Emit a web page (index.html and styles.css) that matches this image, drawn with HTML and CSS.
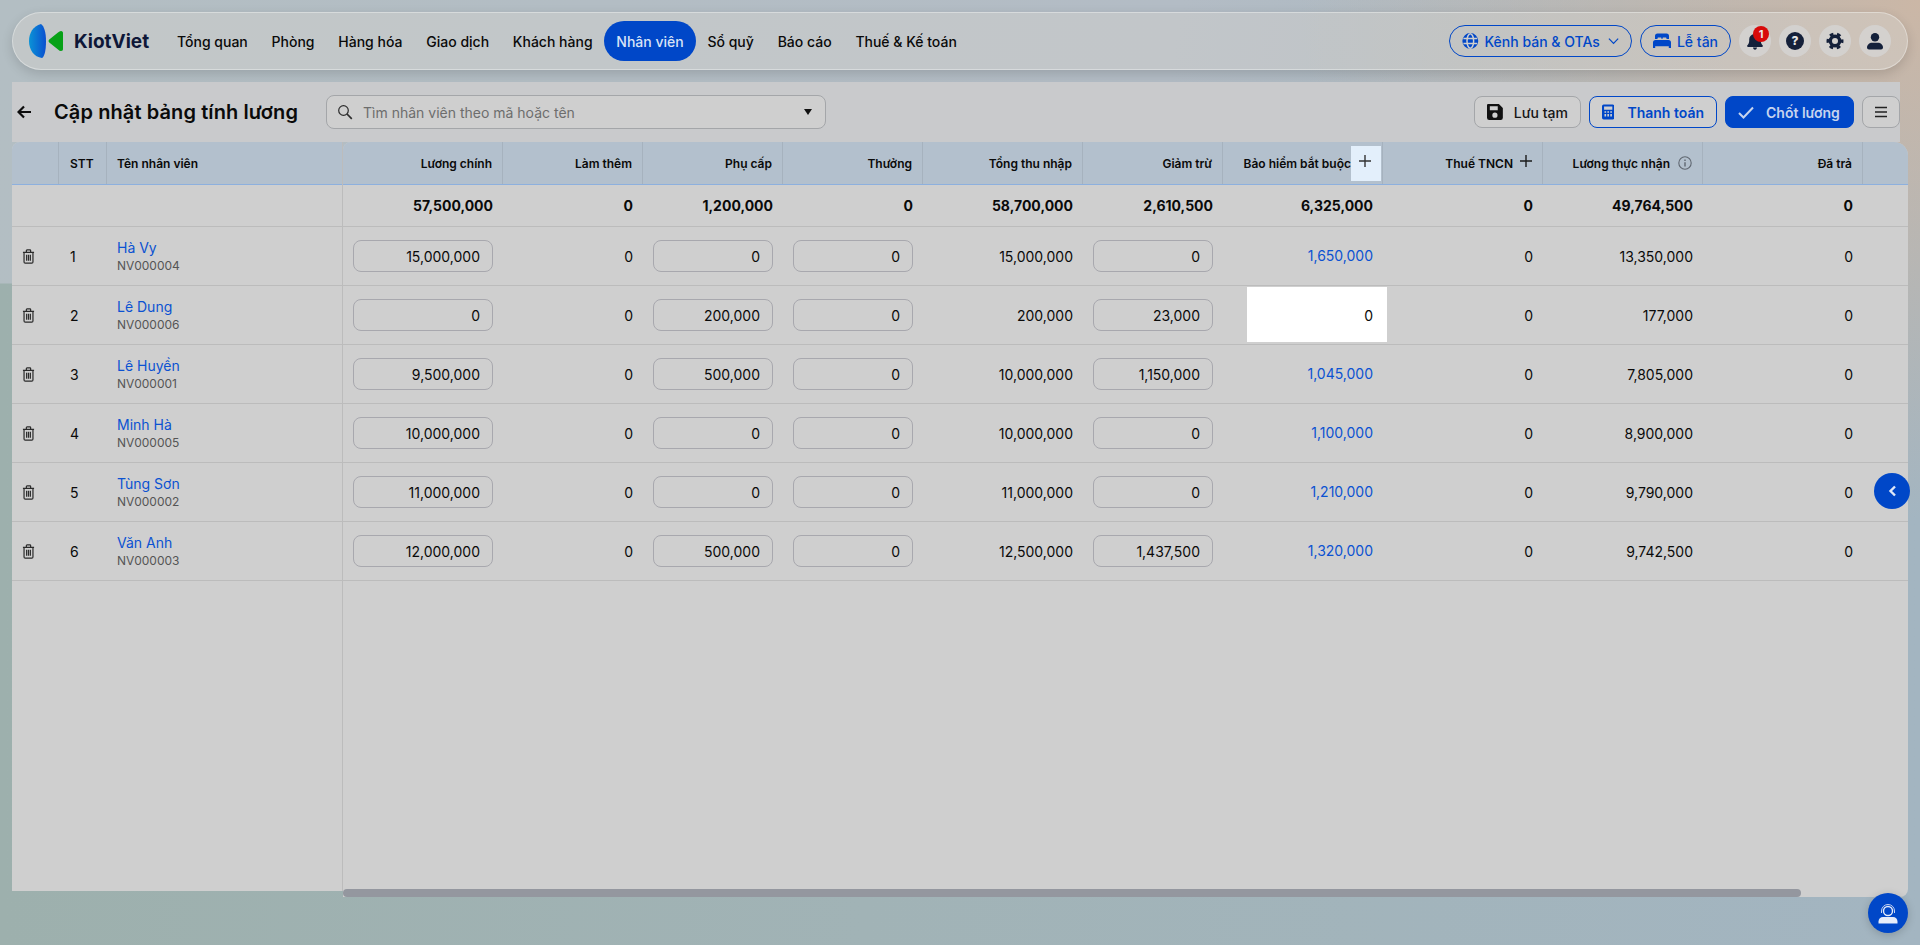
FILE: index.html
```html
<!DOCTYPE html>
<html lang="en">
<head>
    <meta charset="UTF-8">
    <meta name="viewport" content="width=device-width, initial-scale=1.0">
    <title>Cập nhật bảng tính lương | KiotViet</title>
    <link rel="stylesheet" href="styles.css">
</head>
<body>
    <svg class="icon-defs" width="0" height="0">
        <symbol id="trash" viewBox="0 0 14 16">
            <path d="M1 3.500h12M4.700 3.200V1.600c0-.4.3-.7.7-.7h3.200c.4 0 .7.3.7.7v1.600M2.200 3.500v10.300c0 .8.600 1.300 1.300 1.300h7c.7 0 1.300-.5 1.300-1.300V3.500M5 6.200v6.400M7 6.200v6.400M9 6.200v6.400" fill="none" stroke="currentColor" stroke-width="1.300"/>
        </symbol>
        <symbol id="plus" viewBox="0 0 14 14">
            <path d="M7 1v12M1 7h12" fill="none" stroke="currentColor" stroke-width="1.400"/>
        </symbol>
    </svg>

    <header class="topbar">
        <a href="#" class="brand">
            <svg width="34" height="34" viewBox="0 0 34 34">
                <defs>
                    <linearGradient id="lens" x1="0" x2="1" y1="0" y2="0">
                        <stop offset="0" stop-color="#0b93d6"/>
                        <stop offset="1" stop-color="#0a4fd0"/>
                    </linearGradient>
                </defs>
                <path d="M12 0C4 2 0 9 0 17c0 9 5 16 13 17 2-1 4-6 4-17 0-9-2-15-5-17z" fill="url(#lens)"/>
                <path d="M32 7c1.500 0 2 1 2 2v16c0 1-.5 2-2 2-1 0-2-.5-3-1.500l-8.700-7c-1-1-1-2 0-3l8.700-7c1-1 2-1.500 3-1.500z" fill="#07a117"/>
            </svg>
            <span class="brand-name">KiotViet</span>
        </a>
        <nav class="main-nav">
            <a href="#" class="nav-item">Tổng quan</a>
            <a href="#" class="nav-item">Phòng</a>
            <a href="#" class="nav-item">Hàng hóa</a>
            <a href="#" class="nav-item">Giao dịch</a>
            <a href="#" class="nav-item">Khách hàng</a>
            <a href="#" class="nav-item active">Nhân viên</a>
            <a href="#" class="nav-item">Sổ quỹ</a>
            <a href="#" class="nav-item">Báo cáo</a>
            <a href="#" class="nav-item">Thuế &amp; Kế toán</a>
        </nav>
        <div class="top-actions">
            <button class="pill-btn channel-btn">
                <svg width="18" height="18" viewBox="0 0 18 18" fill="none" stroke="currentColor" stroke-width="1.600">
                    <circle cx="9" cy="9" r="7.800" fill="currentColor"/>
                    <ellipse cx="9" cy="9" rx="3.600" ry="7.800" stroke="#d0cfcd"/>
                    <path d="M1.500 6.300h15M1.500 11.700h15" stroke="#d0cfcd"/>
                </svg>
                Kênh bán &amp; OTAs
                <svg class="chevron" width="12" height="8" viewBox="0 0 12 8">
                    <path d="M1 1.500l5 5 5-5" fill="none" stroke="currentColor" stroke-width="1.300"/>
                </svg>
            </button>
            <button class="pill-btn">
                <svg width="18" height="16" viewBox="0 0 18 16" fill="currentColor">
                    <path d="M2 3a2.500 2.500 0 0 1 2.500-2.500h9A2.500 2.500 0 0 1 16 3v3h-2.500V5.500c0-.6-.4-1-1-1h-2c-.6 0-1 .4-1 1V6h-1v-.5c0-.6-.4-1-1-1h-2c-.6 0-1 .4-1 1V6H2z"/>
                    <path d="M2.500 7h13A2.500 2.500 0 0 1 18 9.500V15h-2.200v-1.800H2.200V15H0V9.500A2.500 2.500 0 0 1 2.500 7z"/>
                </svg>
                Lễ tân
            </button>
            <button class="round-btn notify-btn">
                <svg width="16" height="18" viewBox="0 0 16 18" fill="#14203a">
                    <path d="M8 0c.7 0 1.200.5 1.200 1.200v.7C12 2.400 13.800 4.700 13.800 7.500v1.200c0 1.700.6 3.300 1.700 4.500l.3.400c.4.600 0 1.400-.8 1.400H1c-.8 0-1.200-.8-.8-1.400l.3-.4c1.100-1.200 1.700-2.800 1.700-4.500V7.500c0-2.800 1.800-5.100 4.600-5.600v-.7C6.800.5 7.300 0 8 0z"/>
                    <path d="M6 15.600h4c0 1.200-.9 2.200-2 2.200s-2-1-2-2.200z"/>
                </svg>
                <span class="badge">1</span>
            </button>
            <button class="round-btn help-btn">?</button>
            <button class="round-btn">
                <svg width="18" height="18" viewBox="0 0 18 18" fill="none" stroke="#14203a">
                    <circle cx="9" cy="9" r="4.700" stroke-width="3.400"/>
                    <circle cx="9" cy="9" r="7.200" stroke-width="2.600" stroke-dasharray="3.800 3.740" stroke-dashoffset="1.900"/>
                </svg>
            </button>
            <button class="round-btn">
                <svg width="16" height="17" viewBox="0 0 16 17" fill="#14203a">
                    <circle cx="8" cy="4.300" r="4.200"/>
                    <path d="M4.800 9.800h6.400c2.600 0 4.800 2.200 4.800 4.800 0 1.100-.9 2-2 2H2c-1.100 0-2-.9-2-2 0-2.600 2.200-4.800 4.800-4.800z"/>
                </svg>
            </button>
        </div>
    </header>

    <section class="toolbar">
        <svg class="back" width="14" height="14" viewBox="0 0 14 14">
            <path d="M7 1.500L1.500 7 7 12.500M2 7h12" fill="none" stroke="#0c0c0c" stroke-width="2.200"/>
        </svg>
        <h1 class="page-title">Cập nhật bảng tính lương</h1>
        <div class="search-box">
            <svg width="16" height="16" viewBox="0 0 16 16" fill="none" stroke="#2c2c2c" stroke-width="1.200">
                <circle cx="6.500" cy="6.500" r="4.800"/>
                <path d="M10 10l4.800 4.800" stroke-width="1.700"/>
            </svg>
            <span class="search-text">Tìm nhân viên theo mã hoặc tên</span>
            <span class="caret"></span>
        </div>
        <div class="toolbar-actions">
            <button class="btn btn-save">
                <svg width="16" height="16" viewBox="1 1 14 14" fill="#111">
                    <path d="M2 1h9.500L15 4.500V13a2 2 0 0 1-2 2H3a2 2 0 0 1-2-2V2a1 1 0 0 1 1-1zm1.500 2v3.500h7V3zM8 8.500a2.300 2.300 0 1 0 0 4.600 2.300 2.300 0 0 0 0-4.600z" fill-rule="evenodd"/>
                </svg>
                Lưu tạm
            </button>
            <button class="btn btn-outline">
                <svg width="15" height="18" viewBox="0 0 15 18" fill="currentColor">
                    <path d="M2 0h11a2 2 0 0 1 2 2v14a2 2 0 0 1-2 2H2a2 2 0 0 1-2-2V2a2 2 0 0 1 2-2zm.5 2.500v3.800h10V2.500zM3 8v2h2V8zm3.500 0v2h2V8zM10 8v2h2V8zm-7 3.500v3h2v-3zm3.500 0v3h2v-3zm3.500 0v3h2v-3z" fill-rule="evenodd"/>
                </svg>
                Thanh toán
            </button>
            <button class="btn btn-primary">
                <svg width="16" height="13" viewBox="0 0 16 13">
                    <path d="M1 7l4.500 4.500L15 1.500" fill="none" stroke="currentColor" stroke-width="2"/>
                </svg>
                Chốt lương
            </button>
            <button class="btn btn-menu">
                <svg width="14" height="12" viewBox="0 0 14 12">
                    <path d="M1 1.500h12M1 6h12M1 10.500h12" fill="none" stroke="#222" stroke-width="1.500"/>
                </svg>
            </button>
        </div>
    </section>

    <main class="sheet">
        <div class="frozen">
            <div class="frozen-row head">
                <div class="cell"></div>
                <div class="cell">STT</div>
                <div class="cell">Tên nhân viên</div>
            </div>
            <div class="frozen-row total">
                <div class="cell"></div><div class="cell"></div><div class="cell"></div>
            </div>
            <div class="frozen-row body-row">
                <div class="cell trash"><svg width="13" height="15"><use href="#trash"/></svg></div>
                <div class="cell">1</div>
                <div class="cell name"><a href="#" class="link">Hà Vy</a><span class="code">NV000004</span></div>
            </div>
            <div class="frozen-row body-row">
                <div class="cell trash"><svg width="13" height="15"><use href="#trash"/></svg></div>
                <div class="cell">2</div>
                <div class="cell name"><a href="#" class="link">Lê Dung</a><span class="code">NV000006</span></div>
            </div>
            <div class="frozen-row body-row">
                <div class="cell trash"><svg width="13" height="15"><use href="#trash"/></svg></div>
                <div class="cell">3</div>
                <div class="cell name"><a href="#" class="link">Lê Huyền</a><span class="code">NV000001</span></div>
            </div>
            <div class="frozen-row body-row">
                <div class="cell trash"><svg width="13" height="15"><use href="#trash"/></svg></div>
                <div class="cell">4</div>
                <div class="cell name"><a href="#" class="link">Minh Hà</a><span class="code">NV000005</span></div>
            </div>
            <div class="frozen-row body-row">
                <div class="cell trash"><svg width="13" height="15"><use href="#trash"/></svg></div>
                <div class="cell">5</div>
                <div class="cell name"><a href="#" class="link">Tùng Sơn</a><span class="code">NV000002</span></div>
            </div>
            <div class="frozen-row body-row">
                <div class="cell trash"><svg width="13" height="15"><use href="#trash"/></svg></div>
                <div class="cell">6</div>
                <div class="cell name"><a href="#" class="link">Văn Anh</a><span class="code">NV000003</span></div>
            </div>
        </div>

        <div class="scroller">
            <div class="data-row head">
                <div class="cell">Lương chính</div>
                <div class="cell">Làm thêm</div>
                <div class="cell">Phụ cấp</div>
                <div class="cell">Thưởng</div>
                <div class="cell">Tổng thu nhập</div>
                <div class="cell">Giảm trừ</div>
                <div class="cell">Bảo hiểm bắt buộc<span class="add-btn focus"><svg width="14" height="14"><use href="#plus"/></svg></span></div>
                <div class="cell">Thuế TNCN<span class="add-btn"><svg width="14" height="14"><use href="#plus"/></svg></span></div>
                <div class="cell">Lương thực nhận
                    <svg class="info" width="14" height="14" viewBox="0 0 14 14">
                        <circle cx="7" cy="7" r="6.200" fill="none" stroke="#5f6670" stroke-width="1.100"/>
                        <path d="M7 6.200v4.200M7 3.500v1.500" stroke="#5f6670" stroke-width="1.400"/>
                    </svg>
                </div>
                <div class="cell">Đã trả</div>
                <div class="cell"></div>
            </div>
            <div class="data-row total">
                <div class="cell">57,500,000</div>
                <div class="cell">0</div>
                <div class="cell">1,200,000</div>
                <div class="cell">0</div>
                <div class="cell">58,700,000</div>
                <div class="cell">2,610,500</div>
                <div class="cell">6,325,000</div>
                <div class="cell">0</div>
                <div class="cell">49,764,500</div>
                <div class="cell">0</div>
                <div class="cell"></div>
            </div>
            <div class="data-row body-row">
                <div class="cell"><input class="amount" value="15,000,000"></div>
                <div class="cell">0</div>
                <div class="cell"><input class="amount" value="0"></div>
                <div class="cell"><input class="amount" value="0"></div>
                <div class="cell">15,000,000</div>
                <div class="cell"><input class="amount" value="0"></div>
                <div class="cell"><a href="#" class="link">1,650,000</a></div>
                <div class="cell">0</div>
                <div class="cell">13,350,000</div>
                <div class="cell">0</div>
                <div class="cell"></div>
            </div>
            <div class="data-row body-row">
                <div class="cell"><input class="amount" value="0"></div>
                <div class="cell">0</div>
                <div class="cell"><input class="amount" value="200,000"></div>
                <div class="cell"><input class="amount" value="0"></div>
                <div class="cell">200,000</div>
                <div class="cell"><input class="amount" value="23,000"></div>
                <div class="cell spotlight"><span>0</span></div>
                <div class="cell">0</div>
                <div class="cell">177,000</div>
                <div class="cell">0</div>
                <div class="cell"></div>
            </div>
            <div class="data-row body-row">
                <div class="cell"><input class="amount" value="9,500,000"></div>
                <div class="cell">0</div>
                <div class="cell"><input class="amount" value="500,000"></div>
                <div class="cell"><input class="amount" value="0"></div>
                <div class="cell">10,000,000</div>
                <div class="cell"><input class="amount" value="1,150,000"></div>
                <div class="cell"><a href="#" class="link">1,045,000</a></div>
                <div class="cell">0</div>
                <div class="cell">7,805,000</div>
                <div class="cell">0</div>
                <div class="cell"></div>
            </div>
            <div class="data-row body-row">
                <div class="cell"><input class="amount" value="10,000,000"></div>
                <div class="cell">0</div>
                <div class="cell"><input class="amount" value="0"></div>
                <div class="cell"><input class="amount" value="0"></div>
                <div class="cell">10,000,000</div>
                <div class="cell"><input class="amount" value="0"></div>
                <div class="cell"><a href="#" class="link">1,100,000</a></div>
                <div class="cell">0</div>
                <div class="cell">8,900,000</div>
                <div class="cell">0</div>
                <div class="cell"></div>
            </div>
            <div class="data-row body-row">
                <div class="cell"><input class="amount" value="11,000,000"></div>
                <div class="cell">0</div>
                <div class="cell"><input class="amount" value="0"></div>
                <div class="cell"><input class="amount" value="0"></div>
                <div class="cell">11,000,000</div>
                <div class="cell"><input class="amount" value="0"></div>
                <div class="cell"><a href="#" class="link">1,210,000</a></div>
                <div class="cell">0</div>
                <div class="cell">9,790,000</div>
                <div class="cell">0</div>
                <div class="cell"></div>
            </div>
            <div class="data-row body-row">
                <div class="cell"><input class="amount" value="12,000,000"></div>
                <div class="cell">0</div>
                <div class="cell"><input class="amount" value="500,000"></div>
                <div class="cell"><input class="amount" value="0"></div>
                <div class="cell">12,500,000</div>
                <div class="cell"><input class="amount" value="1,437,500"></div>
                <div class="cell"><a href="#" class="link">1,320,000</a></div>
                <div class="cell">0</div>
                <div class="cell">9,742,500</div>
                <div class="cell">0</div>
                <div class="cell"></div>
            </div>
            <div class="scroll-thumb"></div>
        </div>

        <button class="side-toggle">
            <svg width="9" height="12" viewBox="0 0 9 12">
                <path d="M7 1.500L2.500 6 7 10.500" fill="none" stroke="#dfe8f8" stroke-width="2.400"/>
            </svg>
        </button>
    </main>

    <button class="support-btn">
        <svg width="20" height="21" viewBox="0 0 20 21" fill="none">
            <path d="M3.500 10V8a6.500 6.500 0 0 1 13 0v2" stroke="#c9d6f2" stroke-width="1"/>
            <circle cx="10" cy="8" r="4.500" stroke="#e6ecfa" stroke-width="1.400"/>
            <path d="M7.500 10.300c1 .7 3.500.7 5.500 0" stroke="#0047c8" stroke-width="1"/>
            <path d="M5 14h10c2.500 0 4.500 2 4.500 4.500V20.500H.5v-2C.5 16 2.500 14 5 14z" fill="#e6ecfa"/>
        </svg>
    </button>
</body>
</html>
```

FILE: styles.css
```css
:root {
    --primary: #0047c8;
    --link: #0b52d2;
    --panel: #cfcfcf;
    --head: #b3c0cd;
    --line: #bcbcbc;
    --text: #0a0a0a;
    --text-secondary: #555555;
}

* {
    margin: 0;
    padding: 0;
    box-sizing: border-box;
    font-family: Inter, "Noto Sans", sans-serif;
}

body {
    height: 945px;
    overflow: hidden;
    padding: 12px;
    display: flex;
    flex-direction: column;
    color: var(--text);
    font-size: 14px;
    background:
        radial-gradient(ellipse 620px 520px at 100% 0, #cbb7a6 0%, rgba(203, 183, 166, 0) 100%),
        linear-gradient(100deg, #b3bec3 0%, #b3bcc5 60%, rgba(179, 188, 197, 0) 100%) top / 100% 30% no-repeat,
        linear-gradient(90deg, #9db0ad 0%, #a1b3b6 45%, #a3b5c1 100%);
}

a {
    text-decoration: none;
    color: inherit;
}

button {
    border: none;
    background: none;
    cursor: pointer;
}

.icon-defs {
    position: absolute;
}

/* Top navigation */
.topbar {
    flex: none;
    height: 58px;
    display: flex;
    align-items: center;
    padding: 0 16px;
    border-radius: 29px;
    background: rgba(215, 212, 208, 0.42);
    border: 1px solid rgba(255, 255, 255, 0.35);
    box-shadow: 0 4px 12px rgba(0, 0, 0, 0.14);
}

.brand {
    display: flex;
    align-items: center;
    gap: 11px;
    margin-right: 16px;
}

.brand-name {
    font-size: 19px;
    font-weight: 700;
    color: #0e1738;
}

.main-nav {
    display: flex;
    align-items: center;
}

.nav-item {
    height: 40px;
    padding: 0 11.9px;
    display: flex;
    align-items: center;
    border-radius: 20px;
    font-weight: 500;
    white-space: nowrap;
}

.nav-item.active {
    background: var(--primary);
    color: #d9e3f6;
}

.top-actions {
    margin-left: auto;
    display: flex;
    align-items: center;
    gap: 8px;
}

.pill-btn {
    height: 32px;
    padding: 0 12px;
    display: flex;
    align-items: center;
    gap: 6px;
    border-radius: 16px;
    border: 1px solid var(--primary);
    color: var(--primary);
    font-size: 14px;
    font-weight: 500;
    white-space: nowrap;
}

.channel-btn {
    width: 183px;
}

.chevron {
    margin-left: 2px;
}

.round-btn {
    position: relative;
    width: 32px;
    height: 32px;
    border-radius: 50%;
    display: flex;
    align-items: center;
    justify-content: center;
    background: rgba(214, 214, 214, 0.75);
}

.help-btn {
    isolation: isolate;
    color: #e6e6e6;
    font-size: 12px;
    font-weight: 800;
    line-height: 1;
}

.help-btn::before {
    content: "";
    position: absolute;
    z-index: -1;
    inset: 7px;
    border-radius: 50%;
    background: #14203a;
}

.badge {
    position: absolute;
    top: 1px;
    right: 2px;
    width: 16px;
    height: 16px;
    border-radius: 50%;
    background: #d80a0a;
    color: #e9e9e9;
    font-size: 11px;
    font-weight: 700;
    line-height: 16px;
    text-align: center;
}

/* Page toolbar */
.toolbar {
    flex: none;
    height: 60px;
    margin-top: 12px;
    margin-right: 8px;
    display: flex;
    align-items: center;
    padding-left: 5px;
    background: #c9cacc;
}

.page-title {
    margin-left: 23px;
    font-size: 20px;
    font-weight: 600;
    letter-spacing: 0.1px;
    white-space: nowrap;
}

.search-box {
    width: 500px;
    height: 34px;
    margin-left: 28px;
    padding: 0 10px;
    display: flex;
    align-items: center;
    gap: 10px;
    border: 1px solid #a4a6a9;
    border-radius: 8px;
    background: #cfcfcf;
}

.search-text {
    flex: 1;
    color: #6d6d6d;
}

.caret {
    width: 0;
    height: 0;
    margin-right: 3px;
    border-left: 4px solid transparent;
    border-right: 4px solid transparent;
    border-top: 6px solid #111;
}

.toolbar-actions {
    margin-left: auto;
    display: flex;
    gap: 8px;
}

.btn {
    height: 32px;
    padding: 0 12px;
    display: flex;
    align-items: center;
    gap: 12px;
    border: 1px solid #a4a6a9;
    border-radius: 8px;
    background: #cfcfcf;
    color: #151515;
    font-size: 14px;
    font-weight: 500;
    white-space: nowrap;
}

.btn-save {
    width: 107px;
    gap: 11px;
}

.btn-outline {
    border-color: var(--primary);
    color: var(--primary);
    width: 128px;
    font-weight: 600;
    gap: 13px;
}

.btn-primary {
    width: 129px;
    background: var(--primary);
    border-color: var(--primary);
    color: #c6d4ee;
    font-weight: 600;
}

.btn-menu {
    width: 38px;
    padding: 0;
    justify-content: center;
}

/* Salary table */
.sheet {
    position: relative;
    flex: none;
    height: 755px;
    display: flex;
    align-items: flex-start;
}

.frozen {
    flex: none;
    width: 331px;
    height: 749px;
    background: var(--panel);
    border-right: 1px solid var(--line);
    border-top-left-radius: 8px;
    overflow: hidden;
}

.scroller {
    position: relative;
    flex: 1;
    height: 755px;
    background: var(--panel);
    border-radius: 8px 14px 8px 0;
    overflow: hidden;
}

.frozen-row,
.data-row {
    display: grid;
    border-bottom: 1px solid var(--line);
}

.frozen-row {
    grid-template-columns: 47px 48px 235px;
}

.data-row {
    grid-template-columns: 160px 140px 140px 140px 160px 140px 160px 160px 160px 160px 45px;
}

.head {
    height: 43px;
    background: var(--head);
    border-bottom-color: #8db0de;
    font-size: 12px;
    font-weight: 600;
}

.total {
    height: 42px;
}

.body-row {
    height: 59px;
}

.cell {
    display: flex;
    align-items: center;
    padding: 0 10px;
    min-width: 0;
    white-space: nowrap;
}

.data-row .cell {
    justify-content: flex-end;
}

.frozen-row .cell:nth-child(2) {
    padding-left: 11px;
}

.frozen-row .cell.trash {
    padding-left: 10px;
    color: #2b2b2b;
}

.head .cell {
    border-right: 1px solid #a6b2be;
}

.frozen-row.head .cell:last-child,
.data-row.head .cell:last-child {
    border-right: none;
}

.total .cell {
    font-weight: 700;
}

.name {
    flex-direction: column;
    align-items: flex-start;
    justify-content: center;
    padding-bottom: 1px;
}

.link {
    color: var(--link);
    line-height: 20px;
}

.code {
    font-size: 12px;
    line-height: 16px;
    color: var(--text-secondary);
}

.amount {
    width: 100%;
    height: 32px;
    padding: 0 12px;
    border: 1px solid #a8a8ae;
    border-radius: 8px;
    background: transparent;
    font-size: 14px;
    color: var(--text);
    text-align: right;
}

.add-btn {
    flex: none;
    width: 30px;
    height: 35px;
    margin-right: -9px;
    display: flex;
    align-items: center;
    justify-content: center;
    padding: 0 2px 4px 0;
    color: #1b1b1b;
}

.add-btn.focus {
    background: #e3effb;
    color: #333;
}

.data-row.head .cell:nth-child(8) {
    padding-right: 1px;
}

.data-row.head .cell:nth-child(8) .add-btn {
    width: 28px;
    margin-right: 0;
}

.info {
    margin-left: 8px;
    flex: none;
}

.spotlight {
    position: relative;
}

.spotlight::before {
    content: "";
    position: absolute;
    left: 24px;
    right: -4px;
    top: 1px;
    bottom: 2px;
    background: #ffffff;
}

.spotlight span {
    position: relative;
}

.scroll-thumb {
    position: absolute;
    left: 0;
    bottom: 0;
    width: 1458px;
    height: 8px;
    border-radius: 4px;
    background: #94979f;
}

.side-toggle {
    position: absolute;
    top: 331px;
    right: -2px;
    width: 36px;
    height: 36px;
    border-radius: 50%;
    display: flex;
    align-items: center;
    justify-content: center;
    background: var(--primary);
}

.support-btn {
    position: absolute;
    left: 1868px;
    top: 893px;
    width: 40px;
    height: 40px;
    border-radius: 50%;
    display: flex;
    align-items: center;
    justify-content: center;
    background: var(--primary);
    box-shadow: 0 2px 8px rgba(0, 0, 0, 0.18);
}
```
